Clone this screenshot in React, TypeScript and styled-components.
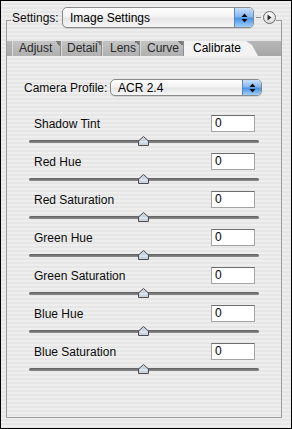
import React, { FunctionComponent } from 'react';
import styled, { createGlobalStyle } from 'styled-components';

const GlobalStyle = createGlobalStyle`
  body {
    margin: 0;
  }
`;

const stripes = `repeating-linear-gradient(to bottom, #eeeeee 0px, #eeeeee 2px, #e6e6e6 2px, #e6e6e6 4px)`;

const Window = styled.div`
  width: 292px;
  height: 429px;
  box-sizing: border-box;
  border: 1px solid #000;
  background: ${stripes};
  font-family: 'Liberation Sans', Arial, sans-serif;
  font-size: 12px;
  color: #0c0c0c;
  overflow: hidden;
`;

const Frame = styled.div`
  margin: 19px 0 0 5px;
  width: 276px;
  height: 398px;
  box-sizing: border-box;
  border: 1px solid #9c9c9c;
  border-top: none;
  display: flex;
  flex-direction: column;
`;

const Header = styled.div`
  margin-top: -14px;
  height: 23px;
  display: flex;
  align-items: center;
`;

const Tick = styled.div<{ $grow?: boolean }>`
  align-self: flex-start;
  margin-top: 14px;
  height: 1px;
  width: 4px;
  flex: ${(p) => (p.$grow ? 1 : 'none')};
  background: #9c9c9c;
`;

const HeaderLabel = styled.span`
  margin-left: 1px;
  width: 50px;
  flex: none;
  white-space: nowrap;
`;

const Popup = styled.div<{ $w: number; $h: number }>`
  width: ${(p) => p.$w}px;
  height: ${(p) => p.$h}px;
  flex: none;
  box-sizing: border-box;
  display: flex;
  align-items: stretch;
  border: 1px solid #8a8a8a;
  border-radius: 5px;
  background: linear-gradient(to bottom, #ffffff 0%, #f3f3f3 45%, #e6e6e6 55%, #f6f6f6 100%);
  box-shadow: 0 1px 1px rgba(0, 0, 0, 0.12);
  overflow: hidden;
`;

const PopupText = styled.span`
  flex: 1;
  display: flex;
  align-items: center;
  padding-left: 7px;
  color: #000;
`;

const PopupArrows = styled.span`
  width: 18px;
  flex: none;
  display: flex;
  align-items: center;
  justify-content: center;
  border-left: 1px solid #5b86c4;
  background: linear-gradient(to bottom, #c9e0fb 0%, #86b6f0 45%, #4f93e6 55%, #9cd0fb 100%);
`;

const Dash = styled.div`
  margin-left: 2px;
  width: 5px;
  height: 1px;
  flex: none;
  background: #8a8a8a;
`;

const CircleButton = styled.div`
  margin-left: 2px;
  width: 13px;
  height: 13px;
  flex: none;
  box-sizing: border-box;
  border: 1px solid #6c6c6c;
  border-radius: 50%;
  background: radial-gradient(circle at 50% 30%, #ffffff 0%, #e4e4e4 60%, #c4c4c4 100%);
  display: flex;
  align-items: center;
  justify-content: center;
`;

const TabBar = styled.div`
  margin-top: 12px;
  height: 15px;
  padding-left: 5px;
  display: flex;
  background: linear-gradient(to bottom, #b8b8b8 0%, #a6a6a6 100%);
`;

const Tab = styled.div<{ $w: number; $pad: number; $active?: boolean }>`
  position: relative;
  width: ${(p) => p.$w}px;
  flex: none;
  box-sizing: border-box;
  padding-left: ${(p) => p.$pad}px;
  line-height: 15px;
  white-space: nowrap;
  color: ${(p) => (p.$active ? '#000' : '#2a2a2a')};
  background: ${(p) =>
    p.$active ? '#f3f3f3' : 'linear-gradient(to bottom, #c4c4c4 0%, #afafaf 100%)'};
  border-left: ${(p) => (p.$active ? 'none' : '1px solid #d8d8d8')};
  border-right: ${(p) => (p.$active ? 'none' : '1px solid #8c8c8c')};
  clip-path: ${(p) =>
    p.$active ? `polygon(0 0, ${p.$w - 12}px 0, ${p.$w - 6}px 4px, ${p.$w}px 100%, 0 100%)` : 'none'};

  &::after {
    content: '';
    display: ${(p) => (p.$active ? 'none' : 'block')};
    position: absolute;
    top: 0;
    right: 0;
    width: 5px;
    height: 5px;
    background: linear-gradient(225deg, #7a7a7a 50%, transparent 50%);
  }
`;

const Panel = styled.div`
  flex: 1;
  padding-top: 23px;
  display: flex;
  flex-direction: column;
  background: ${stripes};
`;

const ProfileRow = styled.div`
  display: flex;
  align-items: center;
  height: 17px;
  margin-bottom: 19px;
`;

const ProfileLabel = styled.span`
  margin-left: 17px;
  width: 86px;
  flex: none;
  white-space: nowrap;
`;

const Row = styled.div`
  height: 38px;
  display: flex;
  flex-direction: column;
`;

const RowLine = styled.div`
  height: 17px;
  display: flex;
  align-items: center;
`;

const RowLabel = styled.span`
  margin-left: 27px;
  flex: 1;
  white-space: nowrap;
`;

const ValueBox = styled.div`
  width: 44px;
  height: 17px;
  margin-right: 26px;
  box-sizing: border-box;
  padding-left: 3px;
  line-height: 15px;
  background: #fff;
  border: 1px solid #a4a4a4;
  border-top-color: #6e6e6e;
  color: #000;
`;

const SliderArea = styled.div`
  position: relative;
  margin: 4px 0 0 22px;
  width: 230px;
  height: 11px;
`;

const Track = styled.div`
  margin-top: 4px;
  height: 3px;
  border-radius: 2px;
  background: linear-gradient(to bottom, #5e5e5e 0%, #8e8e8e 100%);
`;

const Thumb = styled.svg`
  position: absolute;
  left: 109px;
  top: 0;
`;

const UpDownArrows: FunctionComponent = () => (
  <svg width="7" height="10" viewBox="0 0 7 10">
    <path d="M3.5 0.5 L6.5 4 L0.5 4 Z" fill="#111" />
    <path d="M3.5 9.5 L6.5 6 L0.5 6 Z" fill="#111" />
  </svg>
);

const SliderRow: FunctionComponent<{ label: string; value: string }> = ({ label, value }) => (
  <Row>
    <RowLine>
      <RowLabel>{label}</RowLabel>
      <ValueBox>{value}</ValueBox>
    </RowLine>
    <SliderArea>
      <Track />
      <Thumb width="11" height="10" viewBox="0 0 11 10">
        <path d="M5.5 0.5 L10.5 5 L10.5 9.5 L0.5 9.5 L0.5 5 Z" fill="#c9d3de" stroke="#4d4d4d" strokeWidth="1" />
        <path d="M2 6 L9 6" stroke="#eef2f6" strokeWidth="1" />
      </Thumb>
    </SliderArea>
  </Row>
);

const tabs = [
  { name: 'Adjust', w: 49, pad: 6 },
  { name: 'Detail', w: 41, pad: 5 },
  { name: 'Lens', w: 38, pad: 7 },
  { name: 'Curve', w: 44, pad: 6 },
  { name: 'Calibrate', w: 74, pad: 9, active: true },
];

const sliders = [
  'Shadow Tint',
  'Red Hue',
  'Red Saturation',
  'Green Hue',
  'Green Saturation',
  'Blue Hue',
  'Blue Saturation',
];

const App: FunctionComponent = () => {
  return (
    <Window>
      <GlobalStyle />
      <Frame>
        <Header>
          <Tick />
          <HeaderLabel>Settings:</HeaderLabel>
          <Popup $w={192} $h={21}>
            <PopupText>Image Settings</PopupText>
            <PopupArrows>
              <UpDownArrows />
            </PopupArrows>
          </Popup>
          <Dash />
          <CircleButton>
            <svg width="5" height="7" viewBox="0 0 5 7">
              <path d="M0.5 0.5 L4.5 3.5 L0.5 6.5 Z" fill="#2a2a2a" />
            </svg>
          </CircleButton>
          <Tick $grow />
        </Header>
        <TabBar>
          {tabs.map((t) => (
            <Tab key={t.name} $w={t.w} $pad={t.pad} $active={t.active}>
              {t.name}
            </Tab>
          ))}
        </TabBar>
        <Panel>
          <ProfileRow>
            <ProfileLabel>Camera Profile:</ProfileLabel>
            <Popup $w={152} $h={17}>
              <PopupText>ACR 2.4</PopupText>
              <PopupArrows>
                <UpDownArrows />
              </PopupArrows>
            </Popup>
          </ProfileRow>
          {sliders.map((s) => (
            <SliderRow key={s} label={s} value="0" />
          ))}
        </Panel>
      </Frame>
    </Window>
  );
};

export default App;
